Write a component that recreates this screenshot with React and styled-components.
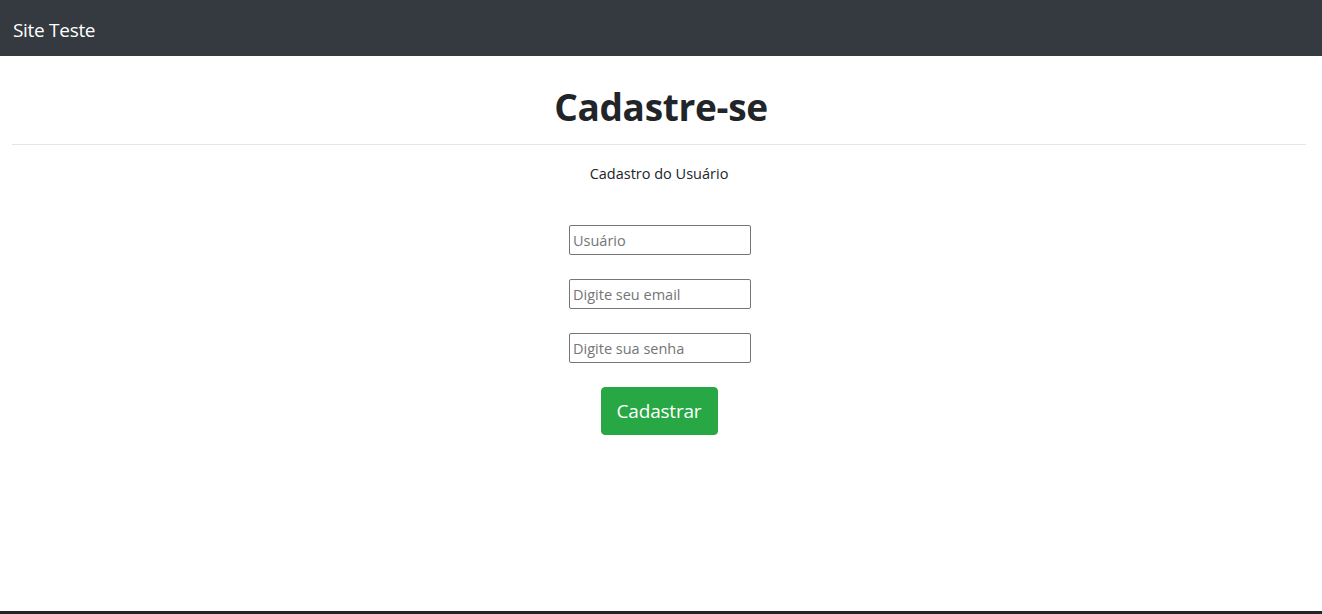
import styled, { createGlobalStyle } from 'styled-components'

const Global = createGlobalStyle`
  html, body { margin: 0; padding: 0; background: #fff; }
  body {
    font-family: "Open Sans", "Noto Sans", Arial, sans-serif;
    color: #212529;
  }
`

const Page = styled.div`
  display: flex;
  flex-direction: column;
  min-height: 614px;
  box-sizing: border-box;
  border-bottom: 3px solid #212529;
`

const Navbar = styled.nav`
  height: 56px;
  background: #343a40;
  display: flex;
  align-items: center;
  padding: 0 13px;
`

const Brand = styled.a`
  color: #fff;
  font-size: 19px;
  letter-spacing: -0.3px;
  text-decoration: none;
  margin-top: 3px;
`

const Main = styled.main`
  flex: 1;
  display: flex;
  flex-direction: column;
  align-items: center;
  padding: 0 16px 0 12px;
`

const Title = styled.h1`
  margin: 26px 0 0 4px;
  font-size: 37px;
  font-weight: 700;
  line-height: 50px;
  letter-spacing: -0.3px;
`

const Rule = styled.hr`
  align-self: stretch;
  margin: 12px 0 0;
  border: 0;
  border-top: 1px solid rgba(0, 0, 0, 0.1);
`

const Subtitle = styled.p`
  margin: 18px 0 0;
  font-size: 14.5px;
  line-height: 22px;
`

const Form = styled.form`
  display: flex;
  flex-direction: column;
  align-items: center;
  gap: 24px;
  margin-top: 40px;
`

const Field = styled.input`
  width: 182px;
  height: 30px;
  box-sizing: border-box;
  margin-left: 2px;
  border: 1px solid #767676;
  border-radius: 2px;
  padding: 0 3px;
  font-family: inherit;
  font-size: 14.5px;
  color: #212529;
  &::placeholder { color: #757575; }
`

const Button = styled.button`
  width: 117px;
  height: 48px;
  background: #28a745;
  color: #fff;
  border: 1px solid #28a745;
  border-radius: 4px;
  font-family: inherit;
  font-size: 19px;
  letter-spacing: -0.2px;
  cursor: pointer;
`

export default function App(){
  return <Page>
    <Global />
    <Navbar>
      <Brand href="#">Site Teste</Brand>
    </Navbar>
    <Main>
      <Title>Cadastre-se</Title>
      <Rule />
      <Subtitle>Cadastro do Usuário</Subtitle>
      <Form onSubmit={e => e.preventDefault()}>
        <Field type="text" placeholder="Usuário" />
        <Field type="email" placeholder="Digite seu email" />
        <Field type="password" placeholder="Digite sua senha" />
        <Button type="submit">Cadastrar</Button>
      </Form>
    </Main>
  </Page>
}
